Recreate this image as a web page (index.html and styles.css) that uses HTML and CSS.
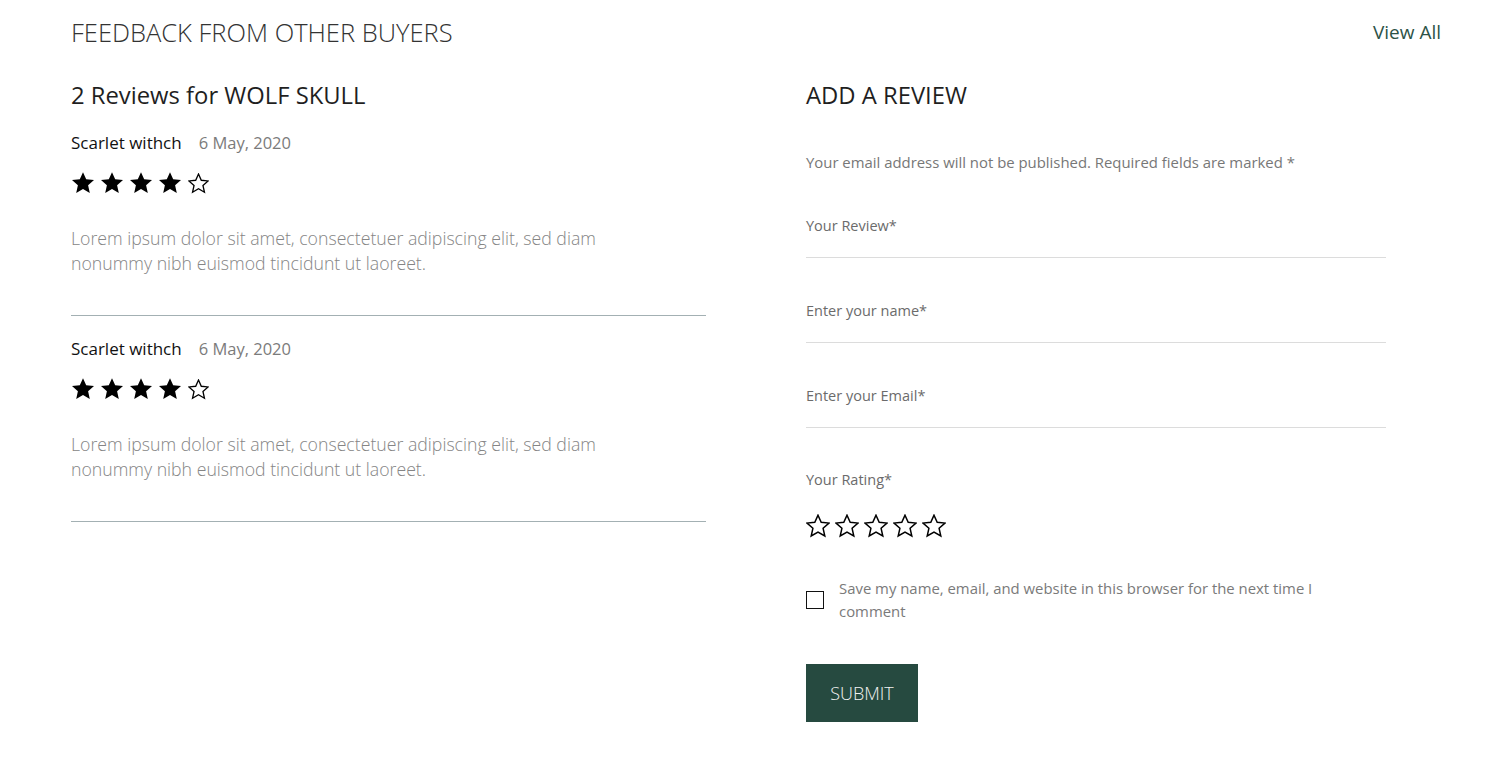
FILE: index.html
```html
<!DOCTYPE html>
<html lang="en">
<head>
<meta charset="utf-8">
<title>Feedback</title>
<link rel="stylesheet" href="styles.css">
</head>
<body>
<div class="page">
  <header class="top">
    <h1 class="top-title">FEEDBACK FROM OTHER BUYERS</h1>
    <a class="view-all" href="#">View All</a>
  </header>
  <div class="cols">
    <section class="reviews">
      <h2 class="col-title">2 Reviews for WOLF SKULL</h2>
      <article class="review">
        <div class="meta"><span class="name">Scarlet withch</span><span class="date">6 May, 2020</span></div>
        <div class="stars">
          <svg class="star full" viewBox="0 0 24 24"><polygon points="12,1.2 15.2,8.3 23,9.1 17.1,14.3 18.8,22 12,18 5.2,22 6.9,14.3 1,9.1 8.8,8.3"/></svg>
          <svg class="star full" viewBox="0 0 24 24"><polygon points="12,1.2 15.2,8.3 23,9.1 17.1,14.3 18.8,22 12,18 5.2,22 6.9,14.3 1,9.1 8.8,8.3"/></svg>
          <svg class="star full" viewBox="0 0 24 24"><polygon points="12,1.2 15.2,8.3 23,9.1 17.1,14.3 18.8,22 12,18 5.2,22 6.9,14.3 1,9.1 8.8,8.3"/></svg>
          <svg class="star full" viewBox="0 0 24 24"><polygon points="12,1.2 15.2,8.3 23,9.1 17.1,14.3 18.8,22 12,18 5.2,22 6.9,14.3 1,9.1 8.8,8.3"/></svg>
          <svg class="star empty small" viewBox="0 0 24 24"><polygon points="12,1.2 15.2,8.3 23,9.1 17.1,14.3 18.8,22 12,18 5.2,22 6.9,14.3 1,9.1 8.8,8.3"/></svg>
        </div>
        <p class="text">Lorem ipsum dolor sit amet, consectetuer adipiscing elit, sed diam nonummy nibh euismod tincidunt ut laoreet.</p>
      </article>
      <article class="review">
        <div class="meta"><span class="name">Scarlet withch</span><span class="date">6 May, 2020</span></div>
        <div class="stars">
          <svg class="star full" viewBox="0 0 24 24"><polygon points="12,1.2 15.2,8.3 23,9.1 17.1,14.3 18.8,22 12,18 5.2,22 6.9,14.3 1,9.1 8.8,8.3"/></svg>
          <svg class="star full" viewBox="0 0 24 24"><polygon points="12,1.2 15.2,8.3 23,9.1 17.1,14.3 18.8,22 12,18 5.2,22 6.9,14.3 1,9.1 8.8,8.3"/></svg>
          <svg class="star full" viewBox="0 0 24 24"><polygon points="12,1.2 15.2,8.3 23,9.1 17.1,14.3 18.8,22 12,18 5.2,22 6.9,14.3 1,9.1 8.8,8.3"/></svg>
          <svg class="star full" viewBox="0 0 24 24"><polygon points="12,1.2 15.2,8.3 23,9.1 17.1,14.3 18.8,22 12,18 5.2,22 6.9,14.3 1,9.1 8.8,8.3"/></svg>
          <svg class="star empty small" viewBox="0 0 24 24"><polygon points="12,1.2 15.2,8.3 23,9.1 17.1,14.3 18.8,22 12,18 5.2,22 6.9,14.3 1,9.1 8.8,8.3"/></svg>
        </div>
        <p class="text">Lorem ipsum dolor sit amet, consectetuer adipiscing elit, sed diam nonummy nibh euismod tincidunt ut laoreet.</p>
      </article>
    </section>
    <section class="form">
      <h2 class="col-title">ADD A REVIEW</h2>
      <p class="note">Your email address will not be published. Required fields are marked *</p>
      <div class="field">Your Review*</div>
      <div class="field">Enter your name*</div>
      <div class="field">Enter your Email*</div>
      <div class="rating-label">Your Rating*</div>
      <div class="stars rate">
        <svg class="star empty" viewBox="0 0 24 24"><polygon points="12,1.2 15.2,8.3 23,9.1 17.1,14.3 18.8,22 12,18 5.2,22 6.9,14.3 1,9.1 8.8,8.3"/></svg>
        <svg class="star empty" viewBox="0 0 24 24"><polygon points="12,1.2 15.2,8.3 23,9.1 17.1,14.3 18.8,22 12,18 5.2,22 6.9,14.3 1,9.1 8.8,8.3"/></svg>
        <svg class="star empty" viewBox="0 0 24 24"><polygon points="12,1.2 15.2,8.3 23,9.1 17.1,14.3 18.8,22 12,18 5.2,22 6.9,14.3 1,9.1 8.8,8.3"/></svg>
        <svg class="star empty" viewBox="0 0 24 24"><polygon points="12,1.2 15.2,8.3 23,9.1 17.1,14.3 18.8,22 12,18 5.2,22 6.9,14.3 1,9.1 8.8,8.3"/></svg>
        <svg class="star empty" viewBox="0 0 24 24"><polygon points="12,1.2 15.2,8.3 23,9.1 17.1,14.3 18.8,22 12,18 5.2,22 6.9,14.3 1,9.1 8.8,8.3"/></svg>
      </div>
      <label class="save">
        <span class="box"></span>
        <span class="save-text">Save my name, email, and website in this browser for the next time I comment</span>
      </label>
      <button class="submit" type="button">SUBMIT</button>
    </section>
  </div>
</div>
</body>
</html>
```

FILE: styles.css
```css
* { box-sizing: border-box; }
html, body { margin: 0; padding: 0; background: #fff; }
body {
  font-family: "Open Sans", "Liberation Sans", sans-serif;
  color: #222;
}
.page { padding: 0 71px; }
.top {
  height: 64px;
  display: flex;
  align-items: center;
  justify-content: space-between;
}
.top-title {
  margin: 0;
  font-size: 25.5px;
  font-weight: 300;
  color: #333;
}
.view-all {
  font-size: 19px;
  font-weight: 400;
  color: #2d5247;
  text-decoration: none;
}
.cols {
  display: flex;
  gap: 100px;
  padding-top: 15px;
}
.reviews { width: 635px; }
.form { width: 580px; }
.col-title {
  margin: 0;
  font-size: 23.8px;
  line-height: 32px;
  font-weight: 400;
  color: #1f1f1f;
}
.review {
  border-bottom: 1px solid #a3b0b3;
  padding-top: 20px;
  padding-bottom: 39px;
}
.review + .review { padding-top: 21px; }
.meta { line-height: 24px; font-size: 16.5px; }
.name { color: #111; font-size: 17px; }
.date { color: #7b7b7b; margin-left: 17px; }
.stars {
  display: flex;
  gap: 5px;
  margin-top: 16px;
  height: 24px;
  align-items: center;
}
.star { width: 24px; height: 24px; display: block; }
.star.full polygon { fill: #000; }
.star.empty polygon { fill: none; stroke: #000; stroke-width: 1.5; stroke-linejoin: miter; }
.star.small { width: 21px; height: 21px; margin-left: 1px; }
.text {
  margin: 31px 0 0;
  font-size: 17.7px;
  line-height: 25px;
  color: #858585;
  max-width: 580px;
  font-weight: 300;
}
.note {
  margin: 40px 0 0;
  font-size: 14.9px;
  line-height: 22px;
  color: #777;
}
.field {
  margin-top: 42px;
  font-size: 14.5px;
  line-height: 22px;
  color: #6b6b6b;
  padding-bottom: 20px;
  border-bottom: 1px solid #dcdcdc;
}
.rating-label {
  margin-top: 41px;
  font-size: 14.5px;
  line-height: 22px;
  color: #6b6b6b;
}
.stars.rate { margin-top: 23px; }
.save {
  margin-top: 39px;
  display: flex;
  align-items: center;
  gap: 15px;
}
.box {
  flex: none;
  width: 18px;
  height: 18px;
  border: 1.5px solid #111;
}
.save-text {
  font-size: 14.9px;
  line-height: 23px;
  color: #7a7a7a;
  max-width: 505px;
}
.submit {
  margin-top: 41px;
  display: block;
  width: 112px;
  height: 58px;
  background: #264a40;
  color: #f2f2f2;
  border: 0;
  font-family: "Open Sans", "Liberation Sans", sans-serif;
  font-size: 18px;
  font-weight: 300;
  padding: 0;
}
```
